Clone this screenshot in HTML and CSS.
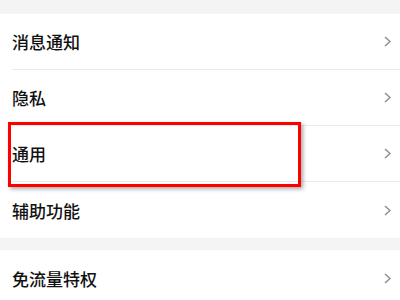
FILE: index.html
```html
<!DOCTYPE html>
<html lang="zh-CN">
<head>
<meta charset="utf-8">
<link rel="stylesheet" href="styles.css">
</head>
<body>
<div class="page">
  <div class="group">
    <div class="row"><span class="label">消息通知</span><svg class="chev" viewBox="0 0 7 11"><polyline points="1,1 6,5.5 1,10"/></svg></div>
    <div class="row"><span class="label">隐私</span><svg class="chev" viewBox="0 0 7 11"><polyline points="1,1 6,5.5 1,10"/></svg></div>
    <div class="row"><span class="label">通用</span><svg class="chev" viewBox="0 0 7 11"><polyline points="1,1 6,5.5 1,10"/></svg></div>
    <div class="row"><span class="label">辅助功能</span><svg class="chev" viewBox="0 0 7 11"><polyline points="1,1 6,5.5 1,10"/></svg></div>
  </div>
  <div class="group">
    <div class="row"><span class="label">免流量特权</span><svg class="chev" viewBox="0 0 7 11"><polyline points="1,1 6,5.5 1,10"/></svg></div>
  </div>
  <div class="highlight"></div>
</div>
</body>
</html>
```
FILE: styles.css
```css
html, body {
  margin: 0;
  padding: 0;
  background: #f4f4f4;
}
.page {
  position: relative;
  width: 400px;
  height: 300px;
  overflow: hidden;
  padding-top: 14px;
  box-sizing: border-box;
  display: flex;
  flex-direction: column;
  gap: 12px;
  font-family: "Noto Sans CJK SC", "Noto Sans", sans-serif;
}
.group {
  background: #ffffff;
  padding-left: 12px;
}
.row {
  height: 56px;
  box-sizing: border-box;
  display: flex;
  align-items: center;
  justify-content: space-between;
  padding-right: 9px;
  border-bottom: 1px solid #e9e9e9;
}
.row:last-child {
  border-bottom: none;
}
.label {
  font-size: 17px;
  font-weight: 500;
  color: #111111;
  line-height: 1;
}
.chev {
  width: 7px;
  height: 11px;
  fill: none;
  stroke: #8e8e8e;
  stroke-width: 1.5;
}
.highlight {
  position: absolute;
  left: 8px;
  top: 122px;
  width: 293px;
  height: 65px;
  box-sizing: border-box;
  border: 3px solid #ff0000;
  box-shadow: 2px 2px 4px rgba(0, 0, 0, 0.35);
}
```
